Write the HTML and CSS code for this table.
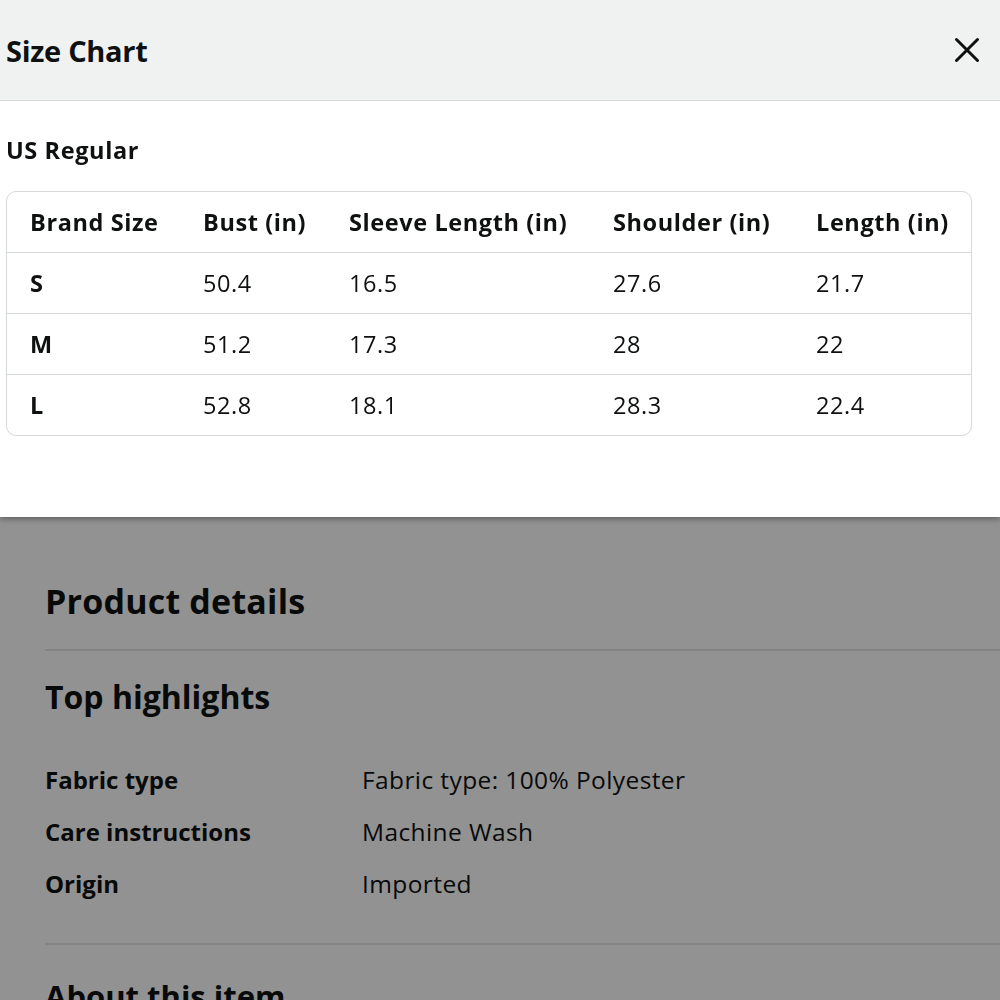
FILE: index.html
```html
<!DOCTYPE html>
<html lang="en">
<head>
    <meta charset="UTF-8">
    <meta name="viewport" content="width=device-width, initial-scale=1.0">
    <title>Size Chart</title>
    <link rel="stylesheet" href="styles.css">
</head>
<body>
    <main class="page">
        <section class="details">
            <h2 class="details-title">Product details</h2>
            <h3 class="highlights-title">Top highlights</h3>
            <dl class="spec-list">
                <div class="spec-row">
                    <dt>Fabric type</dt>
                    <dd>Fabric type: 100% Polyester</dd>
                </div>
                <div class="spec-row">
                    <dt>Care instructions</dt>
                    <dd>Machine Wash</dd>
                </div>
                <div class="spec-row">
                    <dt>Origin</dt>
                    <dd>Imported</dd>
                </div>
            </dl>
        </section>
        <section class="about">
            <h2 class="about-title">About this item</h2>
        </section>
    </main>

    <div class="overlay"></div>

    <div class="modal">
        <header class="modal-header">
            <h1 class="modal-title">Size Chart</h1>
            <button class="close-btn" aria-label="Close">
                <svg width="26" height="26" viewBox="0 0 26 26">
                    <path d="M2.5 2.5 L23.5 23.5 M23.5 2.5 L2.5 23.5" stroke="#0f1111" stroke-width="3" stroke-linecap="round" fill="none"/>
                </svg>
            </button>
        </header>
        <div class="modal-body">
            <div class="chart-label">US Regular</div>
            <div class="chart-wrap">
                <table class="chart">
                    <colgroup>
                        <col class="col-size">
                        <col class="col-bust">
                        <col class="col-sleeve">
                        <col class="col-shoulder">
                        <col class="col-length">
                    </colgroup>
                    <thead>
                        <tr>
                            <th>Brand Size</th>
                            <th>Bust (in)</th>
                            <th>Sleeve Length (in)</th>
                            <th>Shoulder (in)</th>
                            <th>Length (in)</th>
                        </tr>
                    </thead>
                    <tbody>
                        <tr>
                            <th>S</th>
                            <td>50.4</td>
                            <td>16.5</td>
                            <td>27.6</td>
                            <td>21.7</td>
                        </tr>
                        <tr>
                            <th>M</th>
                            <td>51.2</td>
                            <td>17.3</td>
                            <td>28</td>
                            <td>22</td>
                        </tr>
                        <tr>
                            <th>L</th>
                            <td>52.8</td>
                            <td>18.1</td>
                            <td>28.3</td>
                            <td>22.4</td>
                        </tr>
                    </tbody>
                </table>
            </div>
        </div>
    </div>
</body>
</html>
```

FILE: styles.css
```css
:root {
    --text-color: #0f1111;
    --line-color: #d5d9d9;
    --header-bg: #f0f2f2;
}

* {
    margin: 0;
    padding: 0;
    box-sizing: border-box;
    font-family: 'Open Sans', 'Noto Sans', Arial, sans-serif;
}

body {
    background: white;
    color: var(--text-color);
    overflow: hidden;
}

/* page behind the modal */
.page {
    padding: 576px 0 0 45px;
}

.details-title {
    font-size: 34px;
    font-weight: 700;
    letter-spacing: 0.2px;
    line-height: 50px;
    padding-bottom: 23px;
    border-bottom: 2px solid #e3e6e6;
}

.highlights-title {
    font-size: 32px;
    font-weight: 700;
    line-height: 44px;
    margin-top: 24px;
}

.spec-list {
    margin-top: 40px;
    display: flex;
    flex-direction: column;
    gap: 10px;
    padding-bottom: 38px;
    border-bottom: 2px solid #e3e6e6;
}

.spec-row {
    display: flex;
    font-size: 24.5px;
    line-height: 42px;
}

.spec-row dt {
    width: 317px;
    font-weight: 700;
    font-size: 24px;
}

.spec-row dd {
    letter-spacing: 0.4px;
}

.about-title {
    font-size: 31px;
    font-weight: 700;
    line-height: 44px;
    margin-top: 29px;
}

.overlay {
    position: fixed;
    inset: 0;
    background: rgba(0, 0, 0, 0.428);
}

/* modal */
.modal {
    position: fixed;
    top: 0;
    left: 0;
    width: 1000px;
    background: white;
    box-shadow: 0 2px 6px rgba(0, 0, 0, 0.35);
}

.modal-header {
    height: 101px;
    background: var(--header-bg);
    border-bottom: 1px solid var(--line-color);
    display: flex;
    align-items: center;
    justify-content: space-between;
    padding: 0 20px 0 6px;
}

.modal-title {
    font-size: 29px;
    font-weight: 700;
    letter-spacing: -0.3px;
}

.close-btn {
    background: none;
    border: none;
    cursor: pointer;
    display: flex;
    padding: 0;
}

.modal-body {
    padding: 29px 28px 81px 6px;
}

.chart-label {
    font-size: 23.5px;
    font-weight: 700;
    letter-spacing: 0.6px;
    line-height: 40px;
    margin-bottom: 21px;
}

.chart-wrap {
    border: 1px solid var(--line-color);
    border-radius: 10px;
    overflow: hidden;
}

.chart {
    width: 100%;
    border-collapse: collapse;
    table-layout: fixed;
}

.col-size { width: 173px; }
.col-bust { width: 146px; }
.col-sleeve { width: 264px; }
.col-shoulder { width: 203px; }

.chart th,
.chart td {
    text-align: left;
    padding: 0 0 0 23px;
    height: 61px;
    font-size: 23.5px;
    letter-spacing: 0.6px;
    white-space: nowrap;
}

.chart thead th {
    height: 60px;
}

.chart th {
    font-weight: 700;
}

.chart td {
    font-weight: 400;
}

.chart tbody tr {
    border-top: 1px solid var(--line-color);
}
```
